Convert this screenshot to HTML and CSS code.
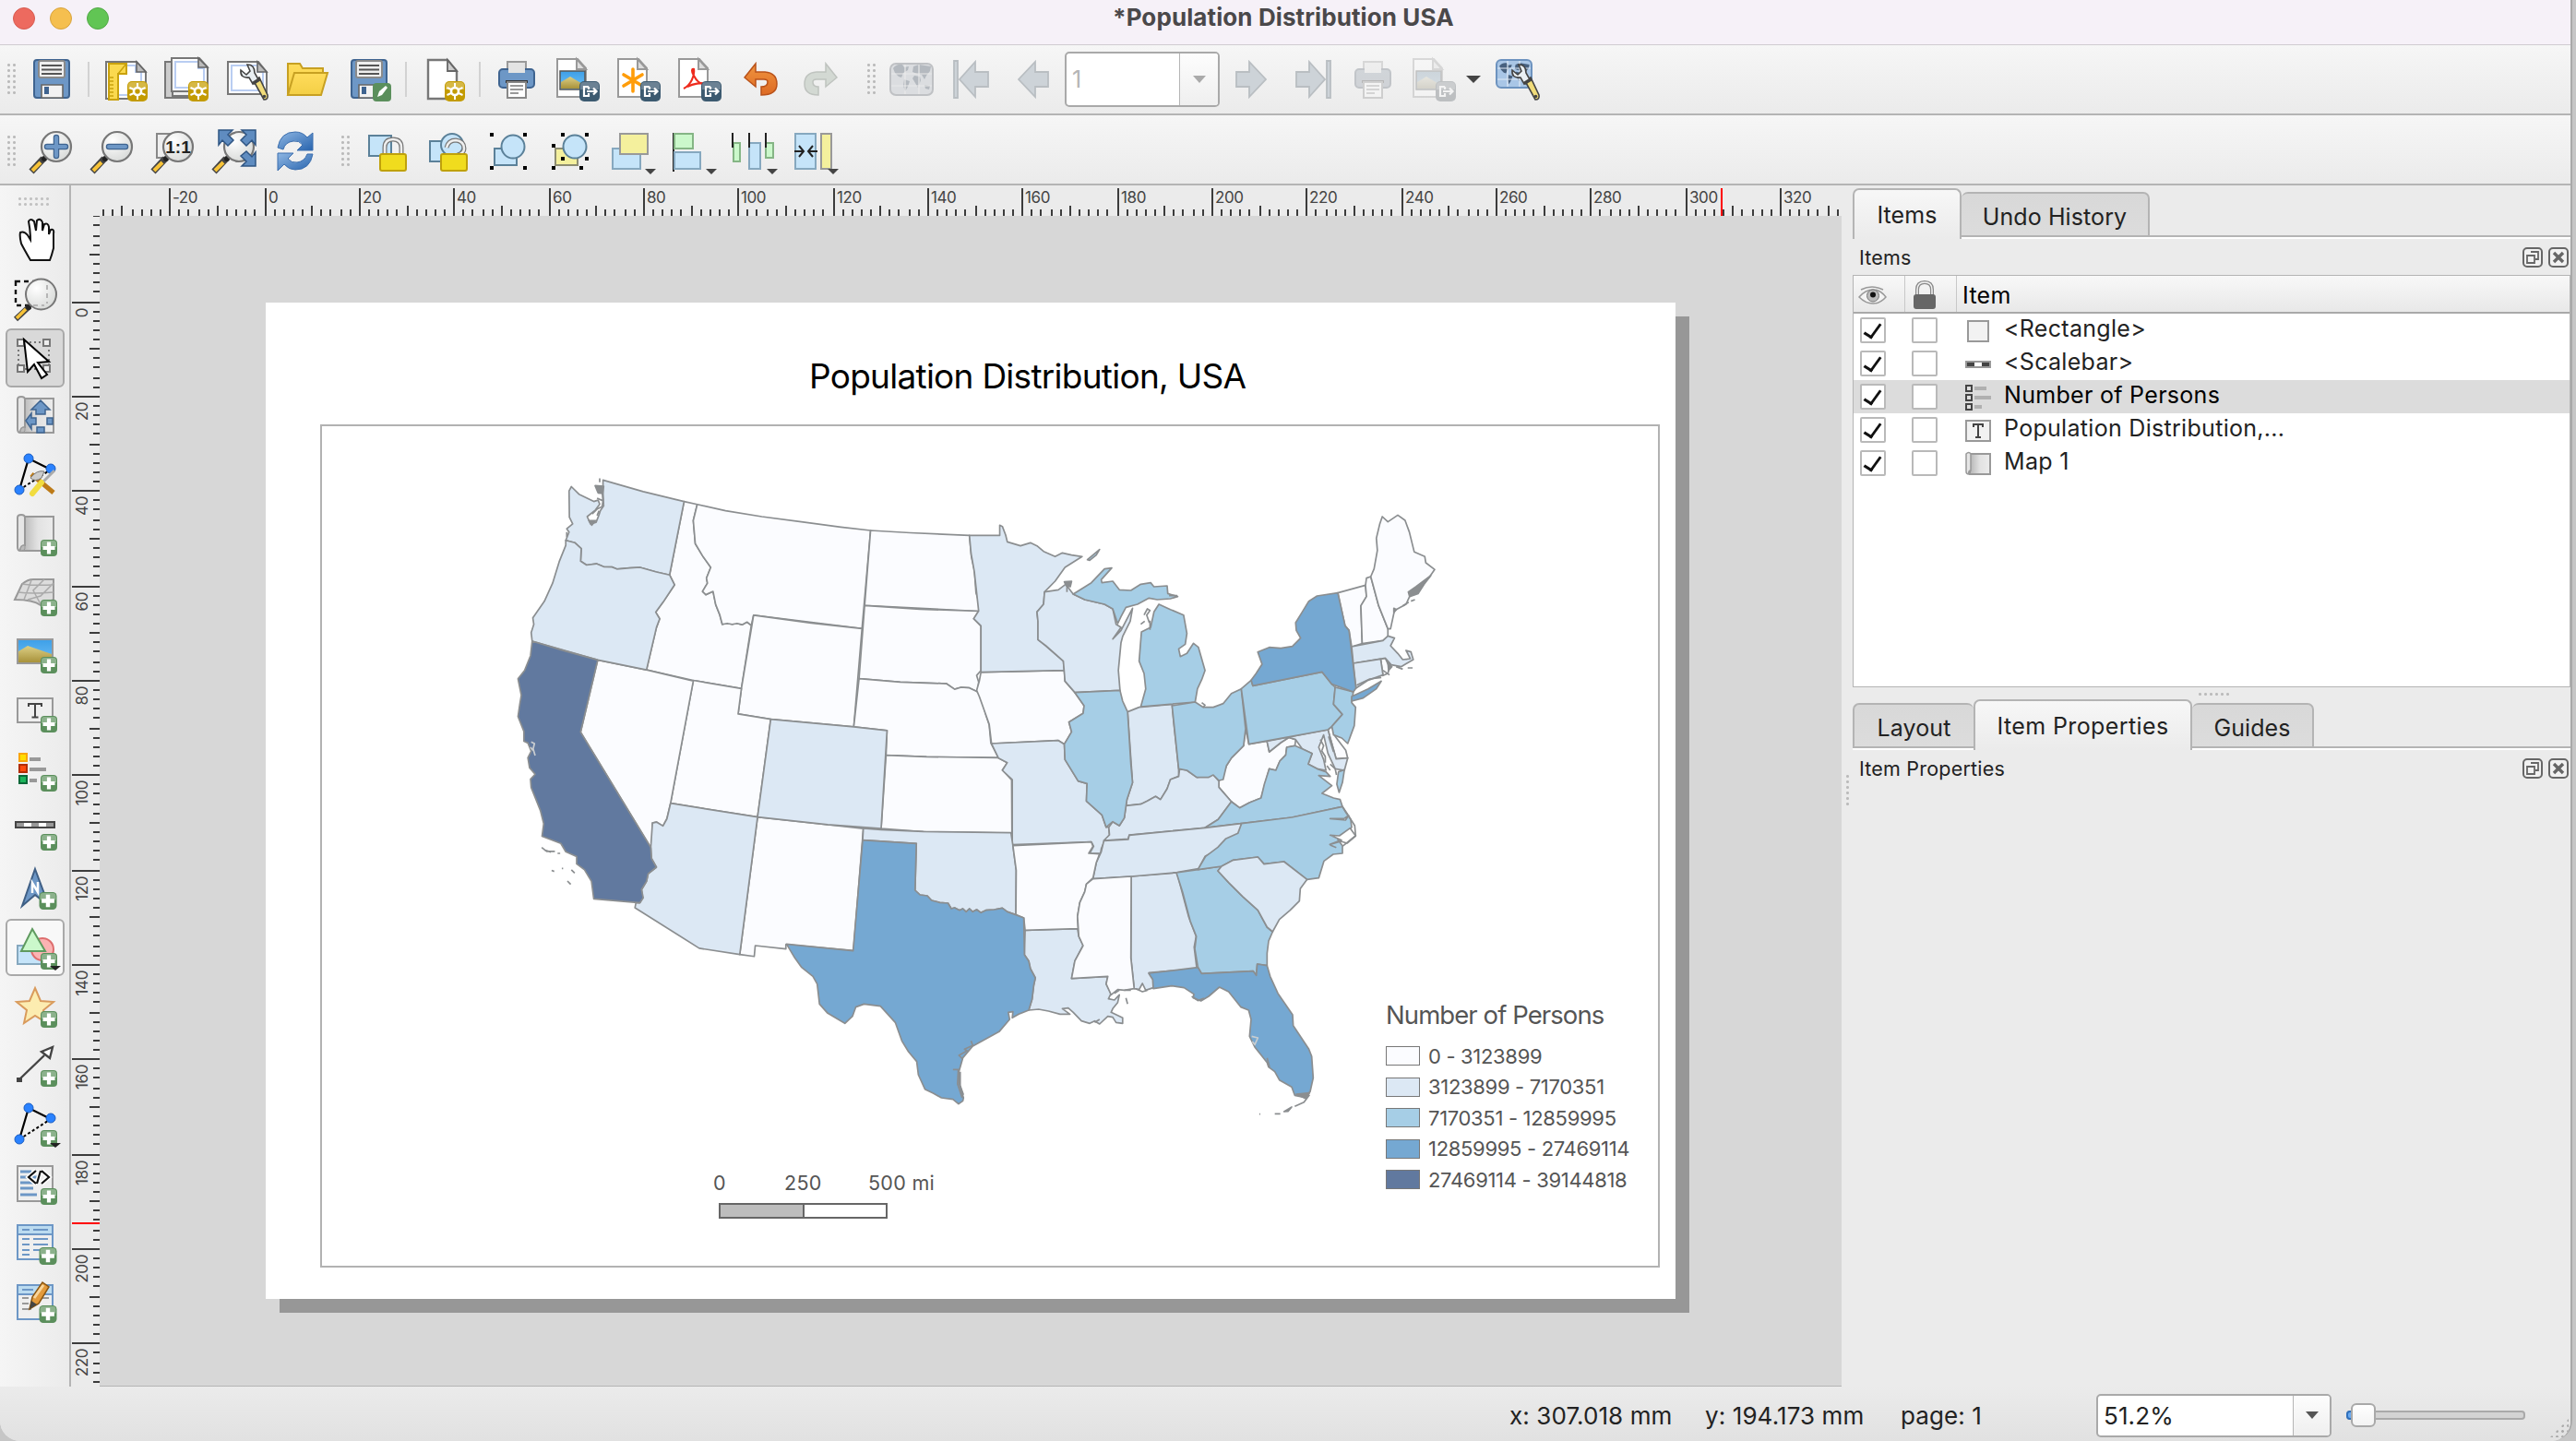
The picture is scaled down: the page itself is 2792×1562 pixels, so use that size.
FILE: index.html
```html
<!DOCTYPE html>
<html lang="en">
<head>
<meta charset="utf-8">
<title>*Population Distribution USA</title>
<link rel="stylesheet" href="styles.css">
</head>
<body>
<svg class="defs" aria-hidden="true">
  <defs>
    <linearGradient id="g-scroll" x1="0" x2="1"><stop offset="0" stop-color="#b5b5b5"/><stop offset=".5" stop-color="#e2e2e2"/><stop offset="1" stop-color="#ececec"/></linearGradient>
    <linearGradient id="g-sky" x1="0" y1="0" x2="0" y2="1"><stop offset="0" stop-color="#3d9fe8"/><stop offset="1" stop-color="#6fc0f5"/></linearGradient>
    <linearGradient id="g-sand" x1="0" y1="0" x2="0" y2="1"><stop offset="0" stop-color="#dccf86"/><stop offset="1" stop-color="#a8923a"/></linearGradient>
    <linearGradient id="g-fold" x1="0" y1="0" x2="0" y2="1"><stop offset="0" stop-color="#ffdc5c"/><stop offset="1" stop-color="#f3cf45"/></linearGradient>
    <linearGradient id="g-undo" x1="0" y1="0" x2="0" y2="1"><stop offset="0" stop-color="#f0953f"/><stop offset="1" stop-color="#dd6a24"/></linearGradient>
    <linearGradient id="g-ref" x1="0" y1="0" x2="1" y2="1"><stop offset="0" stop-color="#8fb7e3"/><stop offset="1" stop-color="#2864ae"/></linearGradient>
    <radialGradient id="g-lens" cx=".35" cy=".3" r=".8"><stop offset="0" stop-color="#fff"/><stop offset="1" stop-color="#d5d7d5"/></radialGradient>
  </defs>
  <symbol id="b-plus" viewBox="0 0 18 18"><rect width="18" height="18" rx="4" fill="#5b8f5c"/><path d="M1 8V4q0-3 3-3h10q3 0 3 3v4z" fill="#8cb28c"/><path d="M9 2.500v13M2.500 9h13" stroke="#fff" stroke-width="4.200"/></symbol>
  <symbol id="b-gear" viewBox="0 0 22 22"><rect width="22" height="22" rx="5" fill="#c39b00"/><path d="M1 9V5q0-4 4-4h12q4 0 4 4v4z" fill="#d6b845"/><circle cx="11" cy="11" r="4" fill="none" stroke="#fff" stroke-width="2.600"/><path d="M11 2v5M11 15v5M2.500 7l4.500 2M15 13l4.500 2M2.500 15l4.500-2M15 9l4.500-2" stroke="#fff" stroke-width="2"/></symbol>
  <symbol id="b-exp" viewBox="0 0 22 22"><rect width="22" height="22" rx="5" fill="#3c5a70"/><path d="M1 9V5q0-4 4-4h12q4 0 4 4v4z" fill="#6c8294"/><path d="M10 6H5v10h5v-3M10 6v3M8 11h10M15 7.500l3.500 3.500-3.500 3.500" fill="none" stroke="#fff" stroke-width="2.200"/></symbol>
  <symbol id="i-save" viewBox="0 0 48 48"><rect x="5" y="3" width="38" height="41" rx="3" fill="#6d97c6" stroke="#3f6490" stroke-width="2"/><rect x="10" y="4" width="28" height="18" rx="2" fill="#efefef" stroke="#8a8a8a" stroke-width="2"/><path d="M13 9h22M13 13.500h22M13 18h22" stroke="#555" stroke-width="1.800"/><path d="M13 44V30h23v14z" fill="#f2f2f2" stroke="#666" stroke-width="1.600"/><rect x="16" y="32" width="5" height="8" fill="#3f6490"/></symbol>
  <symbol id="i-newlayout" viewBox="0 0 48 48"><path d="M3 5h33l10 11v29H3z" fill="#fff" stroke="#777" stroke-width="2"/><path d="M8 9h27v7h6v25H8z" fill="none" stroke="#b9cdf2" stroke-width="2"/><path d="M36 5v11h10z" fill="#bbb" stroke="#666" stroke-width="1.600"/><path d="M6 7h19v11h-9v28H6z" fill="#fad94f" stroke="#c9a20d" stroke-width="2"/><path d="M6 22h5M6 26h5M6 30h5M6 34h5M6 38h5M6 42h5M16 18l9-11" stroke="#c9a20d" stroke-width="1.500"/><use href="#b-gear" x="26" y="26" width="22" height="22"/></symbol>
  <symbol id="i-dup" viewBox="0 0 48 48"><path d="M1 5h8v37h25v2H1z" fill="#ccc" stroke="#777" stroke-width="2"/><path d="M8 1h30l9 10v26H8z" fill="#fff" stroke="#777" stroke-width="2"/><path d="M12 5h25v7h6v21H12z" fill="none" stroke="#b9cdf2" stroke-width="2"/><path d="M37 1v10h10z" fill="#bbb" stroke="#666" stroke-width="1.600"/><use href="#b-gear" x="26" y="26" width="22" height="22"/></symbol>
  <symbol id="i-wrench" viewBox="0 0 48 48"><path d="M31 26l6-4 9 19q1 5-4 5z" fill="#f1dc7a" stroke="#444" stroke-width="1.600"/><path d="M17 14l6 5 4-4-3-7q8 0 8 9l4 7-6 5-4-7q-10 1-9-8z" fill="#e9eff3" stroke="#444" stroke-width="1.600"/><path d="M29 27l8-5 2 3-8 5z" fill="#444"/><circle cx="42.500" cy="42.500" r="1.800" fill="#444"/></symbol>
  <symbol id="i-manager" viewBox="0 0 48 48"><path d="M3 5h33l9 11v24H3z" fill="#fff" stroke="#777" stroke-width="2"/><path d="M7 9h28v7h6v20H7z" fill="none" stroke="#b9cdf2" stroke-width="2"/><path d="M35 5v11h10z" fill="#bbb" stroke="#666" stroke-width="1.600"/><use href="#i-wrench" width="48" height="48"/></symbol>
  <symbol id="i-open" viewBox="0 0 48 48"><path d="M2 41V7h13l3 5h22v6" fill="url(#g-fold)" stroke="#c7a022" stroke-width="2"/><path d="M2 41l7-24h36l-7 24z" fill="url(#g-fold)" stroke="#c7a022" stroke-width="2"/></symbol>
  <symbol id="i-saveas" viewBox="0 0 48 48"><use href="#i-save" width="48" height="48"/><rect x="28" y="28" width="20" height="20" rx="4" fill="#5b8f5c"/><path d="M33 43l2-6 7-6 2 2-6 8z" fill="#fff"/></symbol>
  <symbol id="i-page" viewBox="0 0 48 48"><path d="M8 3h21l10 12v30H8z" fill="#fff" stroke="#777" stroke-width="2.400"/><path d="M29 3v12h10z" fill="#ccc" stroke="#666" stroke-width="1.800"/><use href="#b-gear" x="26" y="26" width="22" height="22"/></symbol>
  <symbol id="i-print" viewBox="0 0 48 48"><rect x="14" y="5" width="20" height="14" fill="#e3e3e3" stroke="#9a9a9a" stroke-width="2"/><rect x="5" y="13" width="38" height="20" rx="4" fill="#6d97c6" stroke="#3f6490" stroke-width="2"/><rect x="15" y="6" width="18" height="11" fill="#e3e3e3"/><rect x="12" y="25" width="24" height="3" fill="#333"/><path d="M14 27h20v17H14z" fill="#fff" stroke="#888" stroke-width="2"/><path d="M17 31h14M17 35h14M17 39h9" stroke="#999" stroke-width="2"/></symbol>
  <symbol id="i-doc" viewBox="0 0 48 48"><path d="M2 2h22l9 10v31H2z" fill="#fff" stroke="#999" stroke-width="2"/><path d="M23 2v11h10z" fill="#ddd" stroke="#999" stroke-width="2"/></symbol>
  <symbol id="i-eximg" viewBox="0 0 48 48"><use href="#i-doc" width="48" height="48"/><rect x="5" y="15" width="27" height="20" fill="url(#g-sky)" stroke="#555" stroke-width="1.500"/><path d="M6 34v-7l10-6 15 9v4z" fill="url(#g-sand)"/><use href="#b-exp" x="26" y="26" width="22" height="22"/></symbol>
  <symbol id="i-exsvg" viewBox="0 0 48 48"><use href="#i-doc" width="48" height="48"/><path d="M18 13v24M8 19l20 12M28 19L8 31" stroke="#ff9d0a" stroke-width="3.600" stroke-linecap="round"/><use href="#b-exp" x="26" y="26" width="22" height="22"/></symbol>
  <symbol id="i-expdf" viewBox="0 0 48 48"><use href="#i-doc" width="48" height="48"/><path d="M7 34c8-4 12-14 11-21-2-1-3 2 0 7 3 6 8 10 13 9-5-2-14 0-20 3" fill="none" stroke="#ee2b1d" stroke-width="2.200"/><use href="#b-exp" x="26" y="26" width="22" height="22"/></symbol>
  <symbol id="i-undo" viewBox="0 0 48 48"><path d="M7 22L19 7v9h10q13 1 13 13 0 12-17 12v-9q7 0 7-5 0-3-4-3h-9v8z" fill="url(#g-undo)" stroke="#b9521a" stroke-width="1.500"/></symbol>
  <symbol id="i-redo" viewBox="0 0 48 48"><path d="M41 22L29 7v9H19Q6 17 6 29q0 12 15 12v-9q-6 0-6-5 0-3 4-3h10v8z" fill="#d3d9d3" stroke="#bfc3bf" stroke-width="1.500"/></symbol>
  <symbol id="i-world" viewBox="0 0 48 48"><path d="M4 12q4-5 10-4l2 3 5-1-1 4-5 3-2 5-3-1-4-4zM16 24l6 2-2 6-3 5-2-6zM26 10l6-2 13 2-1 5-4 5-2 4-3-5-5-1-5-2zM27 20l6 1 1 4-3 8-3-5-3-5zM38 30l6 1-1 4-4-1z"/></symbol>
  <symbol id="i-atlas" viewBox="0 0 48 48"><rect x="1" y="7" width="46" height="34" rx="6" fill="#dbdde0" stroke="#bfc1c4" stroke-width="2"/><use href="#i-world" width="48" height="48" fill="#b4b9bf"/><path d="M17 8v32M32 8v32M2 18h44M2 31h44" stroke="#eaeaea" stroke-width="1.200"/></symbol>
  <symbol id="i-first" viewBox="0 0 48 48"><path d="M4 4h4v40H4zM10 24L27 5v11h14v16H27v11z" fill="#cdd3d8" stroke="#b9bec2" stroke-width="1.800"/></symbol>
  <symbol id="i-prev" viewBox="0 0 48 48"><path d="M8 24L26 5v11h14v16H26v11z" fill="#cdd3d8" stroke="#b9bec2" stroke-width="1.800"/></symbol>
  <symbol id="i-atlasset" viewBox="0 0 48 48"><rect x="1" y="3" width="38" height="30" rx="5" fill="#a9c6e6" stroke="#6d93bf" stroke-width="2"/><use href="#i-world" x="0" y="0" width="40" height="38" fill="#48617f"/><path d="M13 4v28M26 4v28M2 12h36M2 24h36" stroke="#dfeaf5" stroke-width="1.200"/><use href="#i-wrench" width="50" height="48"/></symbol>
  <symbol id="i-lens" viewBox="0 0 48 48"><path d="M15 32L2 46" stroke="#444" stroke-width="7"/><path d="M12 36L3 45" stroke="#f7c338" stroke-width="4"/><circle cx="16" cy="32" r="3" fill="#222"/><circle cx="29" cy="19" r="16" fill="url(#g-lens)" stroke="#777" stroke-width="2.200"/></symbol>
  <symbol id="i-zoomin" viewBox="0 0 48 48"><use href="#i-lens" width="48" height="48"/><path d="M29 9v20M19 19h20" stroke="#3f6490" stroke-width="6.500" stroke-linecap="round"/><path d="M29 9v20M19 19h20" stroke="#6d97c6" stroke-width="4" stroke-linecap="round"/></symbol>
  <symbol id="i-zoomout" viewBox="0 0 48 48"><use href="#i-lens" width="48" height="48"/><path d="M20 19h18" stroke="#3f6490" stroke-width="6.500" stroke-linecap="round"/><path d="M20 19h18" stroke="#6d97c6" stroke-width="4" stroke-linecap="round"/></symbol>
  <symbol id="i-zoom1" viewBox="0 0 48 48"><rect x="6" y="5" width="26" height="26" fill="#eee" stroke="#888" stroke-width="2"/><use href="#i-lens" width="48" height="48"/><text x="29" y="26" text-anchor="middle" font-family="Liberation Sans, sans-serif" font-weight="700" font-size="19" fill="#222">1:1</text></symbol>
  <symbol id="i-zoomfull" viewBox="0 0 48 48"><use href="#i-lens" width="48" height="48"/><path d="M7 1h15l-5 5 6 6-6 6-6-6-4 5zM47 1H32l5 5-6 6 6 6 6-6 4 5zM47 40H32l5-5-6-6 6-5 6 6 4-5z" fill="#5f8cc0" stroke="#2f5583" stroke-width="1.500"/></symbol>
  <symbol id="i-refresh" viewBox="0 0 48 48"><path d="M5 20Q8 3 24 3q8 0 13 6l6-5v19H26l6-6q-4-5-10-4-9 1-11 9z" fill="url(#g-ref)" stroke="#3d6fae"/><path d="M43 27q-3 17-19 17-7 0-12-6l-7 7V26h17l-6 6q4 5 10 4 8-1 11-9z" fill="url(#g-ref)" stroke="#3d6fae"/></symbol>
  <symbol id="i-lock" viewBox="0 0 48 48"><rect x="6" y="7" width="24" height="22" fill="#c5e4f9" stroke="#5b8199" stroke-width="2"/><path d="M23 28V20q0-9 9-9t9 9v8" fill="none" stroke="#777" stroke-width="5"/><path d="M23 28V20q0-9 9-9t9 9v8" fill="none" stroke="#eee" stroke-width="2.500"/><rect x="18" y="27" width="28" height="18" rx="2" fill="#f0dc1e" stroke="#bfa10b" stroke-width="2"/></symbol>
  <symbol id="i-unlock" viewBox="0 0 48 48"><rect x="6" y="13" width="22" height="22" fill="#c5e4f9" stroke="#5b8199" stroke-width="2"/><circle cx="30" cy="17" r="12" fill="#c5e4f9" stroke="#5b8199" stroke-width="2"/><path d="M24 20q2-8 10-8 9 1 9 9 0 5-7 7" fill="none" stroke="#777" stroke-width="5"/><path d="M24 20q2-8 10-8 9 1 9 9 0 5-7 7" fill="none" stroke="#eee" stroke-width="2.500"/><rect x="18" y="27" width="28" height="18" rx="2" fill="#f0dc1e" stroke="#bfa10b" stroke-width="2"/></symbol>
  <symbol id="i-group" viewBox="0 0 48 48"><rect x="10" y="21" width="24" height="18" fill="#c5e4f9" stroke="#5b8199" stroke-width="2"/><circle cx="30" cy="19" r="12.500" fill="#c5e4f9" stroke="#5b8199" stroke-width="2"/><path d="M5 4h4v4H5zM41 4h4v4h-4zM5 40h4v4H5zM41 40h4v4h-4z"/></symbol>
  <symbol id="i-ungroup" viewBox="0 0 48 48"><rect x="10" y="21" width="24" height="18" fill="#f4f09d" stroke="#8d8d72" stroke-width="2"/><circle cx="31" cy="19" r="12.500" fill="#c5e4f9" stroke="#5b8199" stroke-width="2"/><path d="M16 4h4v4h-4zM42 4h4v4h-4zM6 16h4v4H6zM16 30h4v4h-4zM42 30h4v4h-4zM6 40h4v4H6zM36 40h4v4h-4z"/></symbol>
  <symbol id="i-raise" viewBox="0 0 48 48"><rect x="6" y="21" width="30" height="22" fill="#c5e4f9" stroke="#86a8bf" stroke-width="2"/><rect x="14" y="5" width="30" height="22" fill="#f4f09d" stroke="#999" stroke-width="2"/><path d="M41 43h12l-6 6z" fill="#444"/></symbol>
  <symbol id="i-align" viewBox="0 0 48 48"><path d="M6 4v42" stroke="#222" stroke-width="2"/><rect x="7" y="5" width="20" height="16" fill="#cbf8cb" stroke="#85b585" stroke-width="2"/><rect x="7" y="25" width="28" height="18" fill="#c5e4f9" stroke="#86a8bf" stroke-width="2"/><path d="M41 43h12l-6 6z" fill="#444"/></symbol>
  <symbol id="i-distrib" viewBox="0 0 48 48"><rect x="5" y="15" width="7" height="20" fill="#cbf8cb" stroke="#85b585" stroke-width="2"/><rect x="22" y="15" width="12" height="28" fill="#c5e4f9" stroke="#86a8bf" stroke-width="2"/><rect x="40" y="15" width="8" height="16" fill="#cbf8cb" stroke="#85b585" stroke-width="2"/><path d="M4 4v16M22 4v16M40 4v16" stroke="#222" stroke-width="2"/><path d="M41 43h12l-6 6z" fill="#444"/></symbol>
  <symbol id="i-resize" viewBox="0 0 48 48"><rect x="6" y="5" width="22" height="38" fill="#c5e4f9" stroke="#86a8bf" stroke-width="2"/><rect x="34" y="5" width="11" height="38" fill="#f4f09d" stroke="#999" stroke-width="2"/><path d="M5 24h9M10 18l5 6-5 6M30 24h-9M25 18l-5 6 5 6" fill="none" stroke="#222" stroke-width="2"/><path d="M41 43h12l-6 6z" fill="#444"/></symbol>
  <symbol id="i-hand" viewBox="0 0 48 48"><path d="M19 46Q12 34 9 28 7 20 8 16q4-2 8 3l3 5q0-10-2-20 2-4 6 0l2 10 1-11q4-3 6 2v9l2-7q4-2 5 3v8l2-5q4-1 3 4v16q-2 8-4 13z" fill="#fff" stroke="#111" stroke-width="2"/></symbol>
  <symbol id="i-zoomrect" viewBox="0 0 48 48"><path d="M3 5h35v26H3z" fill="none" stroke="#111" stroke-width="2.400" stroke-dasharray="5 4"/><path d="M18 32L3 46" stroke="#444" stroke-width="6"/><path d="M14 35L4 45" stroke="#f7c338" stroke-width="3.500"/><circle cx="17" cy="33" r="3" fill="#222"/><circle cx="30.500" cy="19" r="16.500" fill="url(#g-lens)" stroke="#777" stroke-width="2"/><path d="M37 9v20M22 31h12" stroke="#b5b5b5" stroke-width="2" stroke-dasharray="5 4"/></symbol>
  <symbol id="i-select" viewBox="0 0 48 48"><path d="M8 7h28M8 36h28M6 10v24M39 10v24" stroke="#777" stroke-width="2" stroke-dasharray="2 3"/><path d="M5 4h7v7H5zM33 4h7v7h-7zM5 32h7v7H5zM33 32h7v7h-7z" fill="#eee" stroke="#777" stroke-width="2"/><path d="M12 4l27 24-12 1 10 13-6 4-8-15-7 8z" fill="#fff" stroke="#000" stroke-width="2"/></symbol>
  <symbol id="i-map" viewBox="0 0 48 48"><path d="M10 4h34v37H10z" fill="url(#g-scroll)" stroke="#999" stroke-width="2"/><path d="M5 5q0-3 4-3t4 3v30q-5 0-5 6-3 0-3-4z" fill="#e6e6e6" stroke="#999" stroke-width="2"/><path d="M8 41q0-6 5-6v4q-1 2-5 2z" fill="#bbb" stroke="#999"/></symbol>
  <symbol id="i-move" viewBox="0 0 48 48"><use href="#i-map" width="48" height="48"/><path d="M30 6l10 10h-5v5H25v-5h-5zM14 28l6-8v5h5v7h-5v5zM43 25h-6v7h6zM26 35h8v6h-8z" fill="#6d97c6" stroke="#3f6490" stroke-width="1.500"/></symbol>
  <symbol id="i-nodes" viewBox="0 0 48 48"><path d="M7 39L17 5l24 12" fill="none" stroke="#000" stroke-width="2.200"/><path d="M7 39L41 17" stroke="#000" stroke-width="2" stroke-dasharray="3 2.500"/><g fill="#2a82ff" stroke="#1a5cc0"><circle cx="7" cy="39" r="5"/><circle cx="17" cy="5" r="5"/><circle cx="41" cy="16" r="5"/></g></symbol>
  <symbol id="i-nodeedit" viewBox="0 0 48 48"><use href="#i-nodes" width="48" height="48"/><path d="M20 22l24 20" stroke="#bd7b18" stroke-width="5"/><path d="M19 26q7-9 15-7l-3 7q-7 5-12 0z" fill="#ccc" stroke="#777"/><path d="M45 18L31 32" stroke="#aaa" stroke-width="3"/><path d="M31 31L21 43" stroke="#f1dc3f" stroke-width="6" stroke-linecap="round"/></symbol>
  <symbol id="i-addmap" viewBox="0 0 48 48"><use href="#i-map" width="48" height="48"/><use href="#b-plus" x="30" y="29" width="18" height="18"/></symbol>
  <symbol id="i-add3d" viewBox="0 0 48 48"><path d="M2 30l8-17q6-5 12-5h22v22l-14 6q-8-6-28-6z" fill="#dcdcdc" stroke="#999" stroke-width="2"/><path d="M10 13q10 2 34 1M6 22q14 2 38 0M20 9l-8 21M34 8L22 20l8 15M44 12L30 26l-14 4" fill="none" stroke="#aaa" stroke-width="1.500"/><use href="#b-plus" x="30" y="30" width="18" height="18"/></symbol>
  <symbol id="i-addpic" viewBox="0 0 48 48"><rect x="5" y="9" width="38" height="26" fill="url(#g-sky)" stroke="#999" stroke-width="2"/><path d="M6 34V22l10-6 26 9v9z" fill="url(#g-sand)"/><use href="#b-plus" x="30" y="28" width="18" height="18"/></symbol>
  <symbol id="i-addlabel" viewBox="0 0 48 48"><rect x="5" y="9" width="38" height="26" fill="#efefef" stroke="#999" stroke-width="2"/><path d="M17 18v-3h14v3M24 15v14M20.500 29.500h7" fill="none" stroke="#444" stroke-width="2"/><use href="#b-plus" x="30" y="28" width="18" height="18"/></symbol>
  <symbol id="i-addlegend" viewBox="0 0 48 48"><path d="M7 5h8v8H7z" fill="#fd0" stroke="#f9a50c" stroke-width="2"/><path d="M7 17h8v8H7z" fill="#ff4b0d" stroke="#b32d02" stroke-width="2"/><path d="M7 29h8v8H7z" fill="#1cb55b" stroke="#0b6838" stroke-width="2"/><path d="M18 11h12M18 22h18M18 34h8" stroke="#999" stroke-width="4"/><use href="#b-plus" x="30" y="28" width="18" height="18"/></symbol>
  <symbol id="i-addscale" viewBox="0 0 48 48"><rect x="3" y="15" width="42" height="6" fill="#fff" stroke="#444" stroke-width="2"/><path d="M4 18h8M20 18h8M36 18h8" stroke="#999" stroke-width="4"/><use href="#b-plus" x="30" y="28" width="18" height="18"/></symbol>
  <symbol id="i-addnorth" viewBox="0 0 48 48"><path d="M24 2l15 40-15-12-14 12z" fill="#6d97c6" stroke="#3f5f85" stroke-width="2"/><path d="M21 28V17l6 10V16" fill="none" stroke="#fff" stroke-width="2.500"/><use href="#b-plus" x="28" y="27" width="20" height="19"/></symbol>
  <symbol id="i-addshape" viewBox="0 0 48 48"><rect x="5" y="22" width="26" height="20" fill="#c5e4f9" stroke="#86a8bf" stroke-width="2"/><ellipse cx="32" cy="26" rx="12" ry="12" fill="#fbb3b3" stroke="#dd6d6d" stroke-width="2"/><path d="M21 4l14 24H9z" fill="#cbf8cb" stroke="#5f9a5f" stroke-width="2"/><use href="#b-plus" x="30" y="30" width="18" height="18"/><path d="M40 44h12l-6 5z" fill="#222"/></symbol>
  <symbol id="i-addstar" viewBox="0 0 48 48"><path d="M24 3l6 14 14 1-11 9 4 14-13-8-12 8 3-14-11-9 14-1z" fill="#fcecb0" stroke="#d99b5c" stroke-width="2"/><use href="#b-plus" x="30" y="28" width="18" height="18"/></symbol>
  <symbol id="i-addarrow" viewBox="0 0 48 48"><path d="M7 38L34 12M43 3l-3 12-9-7z" fill="#fff" stroke="#444" stroke-width="2.400"/><path d="M4 36h6v5H4z" fill="#444"/><use href="#b-plus" x="30" y="28" width="18" height="18"/></symbol>
  <symbol id="i-addnode" viewBox="0 0 48 48"><use href="#i-nodes" width="48" height="48"/><use href="#b-plus" x="30" y="29" width="18" height="18"/><path d="M40 43h12l-6 5z" fill="#222"/></symbol>
  <symbol id="i-addhtml" viewBox="0 0 48 48"><rect x="5" y="4" width="38" height="38" fill="#efefef" stroke="#999" stroke-width="2"/><path d="M8 10h12M8 16h22M8 22h16M8 28h14M8 35h18" stroke="#6d97c6" stroke-width="3"/><path d="M25 9l-8 7 8 7M31 9l8 7-8 7M30 9l-4 14" fill="none" stroke="#fff" stroke-width="5"/><path d="M25 9l-8 7 8 7M31 9l8 7-8 7M30 9l-4 14" fill="none" stroke="#111" stroke-width="2.200"/><use href="#b-plus" x="30" y="28" width="18" height="18"/></symbol>
  <symbol id="i-addtable" viewBox="0 0 48 48"><rect x="5" y="4" width="38" height="37" fill="#efefef" stroke="#6d97c6" stroke-width="2"/><path d="M6 5h36v8H6z" fill="#bbdbf0"/><path d="M6 14h36M10 9h8M22 9h16M10 19h8M22 19h16M10 25h8M22 25h16M10 31h8M22 31h16M10 36h8" stroke="#6d97c6" stroke-width="2.200"/><use href="#b-plus" x="28" y="28" width="20" height="19"/></symbol>
  <symbol id="i-addmanual" viewBox="0 0 48 48"><rect x="5" y="5" width="38" height="37" fill="#efefef" stroke="#6d97c6" stroke-width="2"/><path d="M6 6h36v8H6z" fill="#bbdbf0"/><path d="M6 15h36M10 10h12" stroke="#6d97c6" stroke-width="2.200"/><path d="M10 19h7M10 25h7M10 31h10M32 19h7" stroke="#999" stroke-width="2.200"/><path d="M18 31l3-13L32 2l7 5-11 18z" fill="#e39a3b" stroke="#8a5510" stroke-width="1.500"/><path d="M23 19L33 5" stroke="#f8d59b" stroke-width="3"/><path d="M18 31l2-9 6 4z" fill="#444"/><use href="#b-plus" x="28" y="27" width="20" height="19"/></symbol>
  <symbol id="i-float" viewBox="0 0 22 22"><rect x="1" y="1" width="20" height="20" rx="4" fill="#f1f1f1" stroke="#666" stroke-width="2"/><path d="M9 5h8v8h-3M5 9h8v8H5z" fill="none" stroke="#666" stroke-width="1.800"/></symbol>
  <symbol id="i-close" viewBox="0 0 22 22"><rect x="1" y="1" width="20" height="20" rx="4" fill="#f1f1f1" stroke="#666" stroke-width="2"/><path d="M6 6l10 10M16 6L6 16" stroke="#666" stroke-width="3.400"/></symbol>
</svg>

<div class="window">
  <header class="titlebar">
    <div class="lights"><i class="red"></i><i class="amber"></i><i class="green"></i></div>
    <h1>*Population Distribution USA</h1>
  </header>

  <div class="toolbar">
    <span class="grip"></span>
    <svg><use href="#i-save"/></svg><span class="sep"></span>
    <svg><use href="#i-newlayout"/></svg><svg><use href="#i-dup"/></svg><svg><use href="#i-manager"/></svg><svg><use href="#i-open"/></svg><svg><use href="#i-saveas"/></svg><span class="sep"></span>
    <svg><use href="#i-page"/></svg><span class="sep"></span>
    <svg><use href="#i-print"/></svg><svg><use href="#i-eximg"/></svg><svg><use href="#i-exsvg"/></svg><svg><use href="#i-expdf"/></svg><svg><use href="#i-undo"/></svg><svg><use href="#i-redo"/></svg>
    <span class="grip mid"></span>
    <svg><use href="#i-atlas"/></svg><svg><use href="#i-first"/></svg><svg><use href="#i-prev"/></svg>
    <div class="combo page-combo"><span>1</span><b></b></div>
    <svg class="flip"><use href="#i-prev"/></svg><svg class="flip"><use href="#i-first"/></svg><svg class="off"><use href="#i-print"/></svg><svg class="off"><use href="#i-eximg"/></svg><span class="drop"></span>
    <svg><use href="#i-atlasset"/></svg>
  </div>

  <div class="toolbar second">
    <span class="grip"></span>
    <svg><use href="#i-zoomin"/></svg><svg><use href="#i-zoomout"/></svg><svg><use href="#i-zoom1"/></svg><svg><use href="#i-zoomfull"/></svg><svg><use href="#i-refresh"/></svg>
    <span class="grip mid"></span>
    <svg><use href="#i-lock"/></svg><svg><use href="#i-unlock"/></svg><svg><use href="#i-group"/></svg><svg><use href="#i-ungroup"/></svg><svg><use href="#i-raise"/></svg><svg><use href="#i-align"/></svg><svg><use href="#i-distrib"/></svg><svg><use href="#i-resize"/></svg>
  </div>

  <main class="work">
    <nav class="tools">
      <span class="hgrip"></span>
      <a><svg><use href="#i-hand"/></svg></a><a><svg><use href="#i-zoomrect"/></svg></a><a class="pressed"><svg><use href="#i-select"/></svg></a><a><svg><use href="#i-move"/></svg></a><a><svg><use href="#i-nodeedit"/></svg></a><a><svg><use href="#i-addmap"/></svg></a><a><svg><use href="#i-add3d"/></svg></a><a><svg><use href="#i-addpic"/></svg></a><a><svg><use href="#i-addlabel"/></svg></a><a><svg><use href="#i-addlegend"/></svg></a><a><svg><use href="#i-addscale"/></svg></a><a><svg><use href="#i-addnorth"/></svg></a><a class="raised"><svg><use href="#i-addshape"/></svg></a><a><svg><use href="#i-addstar"/></svg></a><a><svg><use href="#i-addarrow"/></svg></a><a><svg><use href="#i-addnode"/></svg></a><a><svg><use href="#i-addhtml"/></svg></a><a><svg><use href="#i-addtable"/></svg></a><a><svg><use href="#i-addmanual"/></svg></a>
    </nav>

    <section class="view">
      <svg class="ruler-h" id="ruler-h" width="1918" height="33"></svg>
      <svg class="ruler-v" id="ruler-v" width="30" height="1269"></svg>
      <div class="canvas">
        <div class="paper">
          <div class="frame"></div>
          <h2 class="map-title">Population Distribution, USA</h2>

          <svg class="map" viewBox="288 328 1528 1080">
            <!-- western states -->
            <g transform="translate(540 500) scale(.35714)">
              <g class="c1">
                <path d="M564 122L604 131 592 180 598 250 622 290 645 322 632 355 635 370 620 395 630 405 652 395 660 435 672 465 680 495 695 492 710 495 725 492 740 496 755 488 768 498 738 690 592 665 450 633 480 505 490 478 478 458 500 428 535 375 520 345Z"/>
                <path d="M604 131L690 150 800 168 920 184 1040 200 1130 210 1104 508 775 467 768 498 755 488 740 496 725 492 710 495 695 492 680 495 672 465 660 435 652 395 630 405 620 395 635 370 632 355 645 322 622 290 598 250 592 180Z"/>
                <path d="M775 467L950 491 1104 508 1079 806 827 783 728 767 738 690Z"/>
                <path d="M1130 210L1250 217 1430 225 1436 290 1445 330 1450 400 1460 430 1458 455 1112 438Z"/>
                <path d="M1112 438L1280 449 1458 455 1443 478 1465 500 1465 635 1452 650 1458 670 1455 700 1430 688 1405 686 1385 692 1360 675 1220 670 1095 660Z"/>
                <path d="M1095 660L1220 670 1360 675 1385 692 1405 686 1430 688 1455 700 1465 715 1480 770 1490 800 1495 855 1518 900 1300 897 1177 892 1180 817 1079 806Z"/>
                <path d="M1177 892L1300 897 1518 900 1545 915 1530 937 1558 967 1559 1129 1300 1125 1162 1115Z"/>
                <path d="M592 665L738 690 728 767 827 783 787 1080 523 1038Z"/>
                <path d="M302 603L450 633 592 667 523 1038 512 1085 500 1107 480 1095 468 1098 468 1140 463 1172 250 822Z"/>
                <path d="M787 1080L1000 1103 1108 1115 1078 1485 873 1467 873 1480 780 1470 777 1503 733 1497Z"/>
              </g>
              <g class="c2">
                <path d="M318 57L440 92 564 122 520 345 480 336 430 322 400 324 360 327 345 321 320 320 298 311 268 315 250 303 252 265 232 247 205 240 215 215 208 205 226 190 216 170 215 90 222 77 245 100 290 122 303 118 308 130 295 148 270 168 280 190 297 185 305 165 310 150 320 135 318 95Z"/>
                <path d="M205 240L232 247 252 265 250 303 268 315 298 311 320 320 345 321 360 327 400 324 430 322 480 336 520 345 535 375 500 428 478 458 490 478 480 505 450 633 302 603 103 546 100 520 108 495 105 475 140 425 165 370 185 305 205 255Z"/>
                <path d="M827 783L1079 806 1180 817 1162 1115 1000 1103 787 1080Z"/>
                <path d="M523 1038L787 1080 733 1497 610 1478 415 1355 418 1340 430 1340 438 1325 435 1300 450 1275 455 1252 480 1232 465 1205 463 1172 468 1098 480 1095 500 1107 512 1085Z"/>
              </g>
              <path class="c5" d="M103 546L200 575 302 603 250 822 463 1172 465 1205 480 1232 455 1252 450 1275 435 1300 440 1325 430 1340 290 1328 283 1275 262 1240 238 1222 238 1200 205 1185 190 1160 133 1138 138 1100 128 1060 100 990 98 965 112 950 95 930 90 900 100 880 90 855 78 850 78 820 60 775 65 740 70 710 60 660 80 635 98 590Z"/>
              <path class="blob" d="M294 74L320 76 317 98 303 96ZM275 180L296 180 284 194Z"/>
              <path class="isle" d="M308 52v12M316 98L318 122M300 112L318 120 315 138 300 145 285 160M300 165L306 150M132 1172l15 12 25 0M140 1180l20 6M180 1190h8M162 1242l8 3M193 1236h4M222 1240l10 10M210 1274l10 10M208 215v15"/>
              <path class="isle pale" d="M100 852l10 5-4 16 6 20M98 868l8 10"/>
            </g>
            <!-- northern, central and north-eastern states -->
            <g transform="translate(1040 500) scale(.35714 .33333)">
              <g class="c1">
                <path d="M65 686L318 680 320 715 350 752 378 795 375 820 332 848 340 880 318 920 300 908 97 918 90 855 75 810 60 765 52 745 60 715Z"/>
                <path d="M1148 428L1232 403 1235 440 1218 470 1222 593 1190 603 1182 550 1170 535Z"/>
                <path d="M1232 403L1235 380 1248 375 1272 470 1300 545 1300 570 1285 583 1222 593 1218 470 1235 440Z"/>
                <path d="M1248 375L1258 350 1268 290 1265 250 1275 205 1283 180 1300 197 1330 175 1352 192 1365 230 1380 295 1412 310 1415 330 1442 352 1425 378 1400 400 1370 430 1355 465 1320 485 1308 545 1300 545 1272 470Z"/>
                <path d="M1278 643L1292 640 1305 670 1300 690 1285 697Z"/>
                <path d="M868 870L878 920 933 910 940 945 975 915 1000 898 1020 905 1018 925 993 930 990 955 972 975 960 1005 940 1000 915 1095 880 1110 850 1127 825 1107 787 1060 787 1040 800 1020 810 990 825 965 862 925Z"/>
                <path d="M1118 873L1130 862 1140 895 1172 940 1178 965 1143 968Z"/>
              </g>
              <g class="c2">
                <path d="M30 241L122 241 122 208 130 212 140 240 145 262 185 275 215 265 235 275 255 293 290 310 312 298 340 305 372 310 320 345 290 390 258 425 255 465 235 490 238 520 238 580 262 600 315 650 318 680 65 686 65 535 43 512 58 487 45 360 35 300Z"/>
                <path d="M258 425L300 418 322 400 345 432 380 450 440 465 465 480 475 530 490 540 465 578 490 550 525 478 518 520 495 570 490 590 482 680 487 745 350 752 320 715 315 650 262 600 238 580 238 520 235 490 255 465Z"/>
                <path d="M510 815L545 800 645 790 650 850 665 1000 665 1025 640 1035 630 1065 610 1100 595 1090 570 1105 550 1115 505 1120 508 1100 525 1045Z"/>
                <path d="M97 918L300 908 318 920 320 970 360 1040 387 1048 385 1105 432 1150 445 1190 453 1190 455 1215 440 1235 430 1260 428 1275 395 1275 407 1252 400 1238 160 1247 160 1035 130 1005 145 980 118 965Z"/>
                <path d="M438 1233L455 1215 453 1190 465 1172 485 1185 500 1160 505 1120 550 1115 570 1105 595 1090 610 1100 630 1065 640 1035 665 1025 668 1000 690 1005 720 1028 770 1020 787 1040 787 1060 825 1107 785 1165 745 1192 515 1215 512 1228Z"/>
                <path d="M1190 603L1285 583 1300 568 1320 575 1308 600 1330 625 1345 645 1368 642 1355 615 1370 620 1377 645 1340 668 1310 662 1292 640 1195 657Z"/>
                <path d="M1195 657L1278 643 1285 695 1240 712 1203 738Z"/>
                <path d="M933 910L1118 873 1143 968 1178 965 1168 1005 1140 1000 1118 950 1105 890 1090 930 1105 970 1112 1005 1085 1000 1058 985 1070 950 1040 935 1020 905 1000 898 975 915 940 945Z"/>
              </g>
              <g class="c3">
                <path d="M350 752L487 745 495 780 510 815 520 985 525 1045 508 1100 500 1160 485 1185 465 1172 445 1190 432 1150 385 1105 387 1048 360 1040 320 970 318 920 340 880 332 848 375 820 378 795Z"/>
                <path d="M345 432L400 395 440 350 462 347 430 385 432 395 465 390 485 418 520 420 550 400 580 395 590 408 630 405 632 430 662 440 640 447 600 450 575 445 540 465 505 475 490 505 480 528 465 480 440 465 380 450Z"/>
                <path d="M605 465L640 482 680 500 690 560 685 595 665 610 670 635 690 625 710 592 725 605 745 680 735 710 722 740 715 783 640 790 550 798 565 740 560 690 545 650 552 555 580 540 590 490Z"/>
                <path d="M645 795L715 783 740 800 770 800 800 788 825 755 855 740 868 870 862 925 825 965 810 990 800 1035 787 1038 770 1020 755 1028 720 1028 690 1005 665 1000Z"/>
                <path d="M855 740L885 712 890 730 1100 685 1130 725 1140 735 1135 790 1162 823 1130 862 1118 873 878 920Z"/>
                <path d="M1140 735L1195 750 1190 785 1202 800 1198 860 1178 918 1160 900 1135 890 1130 862 1162 823 1135 790Z"/>
                <path d="M745 1192L785 1165 825 1107 850 1127 880 1110 915 1095 925 1050 940 1000 960 1005 972 975 990 955 993 930 1018 925 1040 935 1070 950 1058 985 1085 1000 1112 1010 1125 1025 1090 1022 1130 1055 1100 1080 1135 1095 1155 1100 1162 1123 1010 1158 855 1178Z"/>
                <path d="M1150 1010L1168 1003 1162 1045 1152 1077 1145 1050Z"/>
                <path d="M388 320L425 287 415 305 395 322Z"/>
              </g>
              <g class="c4">
                <path d="M885 712L900 690 918 660 905 620 940 605 975 608 1010 602 1035 575 1022 550 1020 525 1040 490 1060 455 1085 438 1148 428 1170 535 1182 550 1192 640 1203 738 1195 750 1130 725 1100 685 890 730Z"/>
                <path d="M1190 765L1240 740 1280 715 1265 740 1225 770 1190 780Z"/>
              </g>
              <path class="blob" d="M1430 372L1410 400 1392 430 1366 440 1362 425 1385 408ZM1318 478L1326 482 1318 492ZM1300 655L1312 668 1302 680ZM318 392L340 390 336 408 324 405Z"/>
              <path class="isle" d="M326 405v20M636 437h25M735 785l10 8-6 8M560 500l10-20 8 5-10 15 8 25M550 530l12-10M578 548v-30M1345 470l18-12M1370 455l12-5M1325 668l20 8M1360 672l15 0M1285 680l20 15M1095 905l10 20-5 15M1098 940l12 20 0 20M1125 985l15 15 4 20M1115 990l10 15M1120 895l15 50M1205 728l40-20 35-5"/>
            </g>
            <!-- southern states -->
            <g transform="translate(840 860) scale(.35714 .33333)">
              <g class="c2">
                <path d="M268 114L322 118 450 124 716 128 722 170 732 250 731 395 705 385 690 373 665 378 640 380 625 388 612 378 600 385 590 375 580 385 570 375 560 380 545 372 535 375 525 357 500 355 475 348 462 333 440 330 425 315 429 163 266 152Z"/>
                <path d="M759 445L918 440 922 465 935 495 910 545 900 602 1010 595 1005 620 1020 650 1012 668 1030 672 1045 655 1040 680 1025 700 1020 712 1055 730 1055 748 1035 745 1025 728 1010 725 985 750 970 740 955 748 930 740 905 712 890 698 872 700 895 718 865 718 830 708 800 702 770 705 780 670 785 625 790 600 775 570 770 545 757 525Z"/>
                <path d="M1081 270L1220 258 1240 340 1255 400 1278 465 1272 500 1280 570 1135 583 1150 605 1148 632 1125 640 1115 618 1105 638 1090 635 1080 535Z"/>
                <path d="M998 154L1072 150 1075 136 1305 112 1415 98 1415 115 1400 140 1365 155 1340 185 1305 205 1285 245 1220 257 1081 270 965 278 975 225 990 190Z"/>
              </g>
              <g class="c1">
                <path d="M722 170L960 158 965 172 952 195 985 197 975 225 965 275 945 295 940 320 925 355 918 400 920 440 759 445 755 405 731 395 732 250Z"/>
                <path d="M965 278L1081 270 1080 535 1090 635 1060 640 1040 638 1020 655 1005 620 1010 595 900 602 910 545 935 495 922 465 918 400 925 355 940 320 945 295Z"/>
              </g>
              <path class="c4" d="M266 152L429 163 425 315 440 330 462 333 475 348 500 355 525 357 535 375 545 372 560 380 570 375 580 385 590 375 600 385 612 378 625 388 640 380 665 378 690 373 705 385 731 395 755 405 757 525 770 545 775 570 790 600 785 625 780 670 770 705 740 718 720 730 722 710 708 712 712 735 680 775 600 822 570 860 558 905 558 940 572 990 570 1000 557 1010 540 995 505 990 480 975 455 962 435 915 430 872 405 840 385 805 365 745 320 692 270 685 245 695 235 725 212 748 160 715 135 685 128 620 115 595 80 565 60 535 35 490 237 512Z"/>
              <path class="isle" d="M595 805l5 15-25 12 8 5-25 15 12 12M540 898l18 0M556 900l-2 45 14 45M562 905l0 45 10 30M1030 650l15-10M1060 640h20M1065 665l5 20M1095 635l20 10 15-5M970 745l15-10"/>
            </g>
            <!-- south-eastern states -->
            <g transform="translate(1140 780) scale(.33333)">
              <g class="c3">
                <path d="M405 498L475 488 552 477 540 492 575 530 620 575 670 620 700 675 718 690 705 720 700 760 700 800 668 795 665 832 655 818 487 826 475 805 465 745 470 705 450 655 425 560Z"/>
                <path d="M617 338L780 318 945 283 955 300 972 325 975 350 955 375 930 390 945 410 945 435 915 438 885 460 868 515 830 520 755 462 690 470 670 447 590 457 552 477 475 488 500 445 540 415 565 388 605 370Z"/>
              </g>
              <path class="c2" d="M552 477L590 457 670 447 690 470 755 462 830 520 808 550 805 590 775 620 740 650 718 690 700 675 670 620 620 575 575 530 540 492Z"/>
              <path class="c4" d="M315 825L475 806 487 826 655 818 665 832 668 795 700 800 710 835 735 890 783 960 785 995 835 1070 845 1095 850 1165 840 1210 820 1228 790 1222 780 1195 740 1172 725 1145 705 1130 700 1115 660 1065 643 1030 648 975 640 945 615 935 575 885 545 870 510 900 485 915 460 905 462 893 430 872 390 866 330 875 328 845Z"/>
              <path class="inlet" d="M905 376l30 2 35-25 18 25-28 24-20-6-36 10 38-14zM905 322l45 0 15-10-10 15z"/>
              <path class="blob" d="M795 1218L838 1214 825 1232ZM755 1275l25-15-12 14z"/>
              <path class="isle" d="M945 283L960 305 985 345 988 378 945 412M905 408l20 8M700 1100l8 30M725 1282h18M790 1258l30-14 18-24M675 1283h3M455 900l20 14 20-8"/>
              <path class="isle pale" d="M650 1030l20 5-10 22-8-10"/>
            </g>
          </svg>

          <dl class="legend">
            <dt>Number of Persons</dt>
            <dd><i class="s1"></i>0 - 3123899</dd>
            <dd><i class="s2"></i>3123899 - 7170351</dd>
            <dd><i class="s3"></i>7170351 - 12859995</dd>
            <dd><i class="s4"></i>12859995 - 27469114</dd>
            <dd><i class="s5"></i>27469114 - 39144818</dd>
          </dl>

          <div class="scale">
            <div class="nums"><span>0</span><span>250</span><span>500 mi</span></div>
            <div class="bar"><i></i><i></i></div>
          </div>
        </div>
      </div>
    </section>

    <aside class="panels">
      <div class="tabs first"><span class="tab on t-items">Items</span><span class="tab t-undo">Undo History</span></div>
      <div class="dock-title"><span>Items</span><svg><use href="#i-float"/></svg><svg><use href="#i-close"/></svg></div>
      <div class="table">
        <div class="thead">
          <span class="c-eye"><svg width="32" height="24" viewBox="0 0 32 24"><path d="M1 14Q8 6 16 6t14 8q-6 7-14 7T1 14z" fill="#f4f4f4" stroke="#999" stroke-width="1.500"/><circle cx="16" cy="12.500" r="6.500" fill="#bbb" stroke="#777"/><circle cx="16" cy="11.500" r="3" fill="#111"/><path d="M3 6q12-6 24 0" fill="none" stroke="#999" stroke-width="1.500"/></svg></span>
          <span class="c-lock"><svg width="26" height="32" viewBox="0 0 26 32"><path d="M5 16V10q0-8 8-8t8 8v6" fill="none" stroke="#888" stroke-width="4"/><path d="M5 16V10q0-8 8-8t8 8v6" fill="none" stroke="#f3f3f3" stroke-width="1.500"/><rect x="1" y="15" width="24" height="16" rx="3" fill="#666"/></svg></span>
          <span class="c-item">Item</span>
        </div>
        <div class="row"><i class="check on"></i><i class="check"></i><svg viewBox="0 0 28 28"><rect x="3" y="3" width="22" height="22" fill="#f2f2f2" stroke="#999" stroke-width="2"/></svg><span>&lt;Rectangle&gt;</span></div>
        <div class="row"><i class="check on"></i><i class="check"></i><svg viewBox="0 0 28 28"><rect x="1" y="11" width="26" height="6" fill="#fff" stroke="#999" stroke-width="2"/><path d="M2 14h8M18 14h8" stroke="#444" stroke-width="4"/></svg><span>&lt;Scalebar&gt;</span></div>
        <div class="row sel"><i class="check on"></i><i class="check"></i><svg viewBox="0 0 28 28"><path d="M1 1h6v6H1zM1 11h6v6H1zM1 21h6v6H1z" fill="#ddd" stroke="#444" stroke-width="2"/><path d="M10 4h13M10 14h18M10 24h8" stroke="#b0b0b0" stroke-width="4"/></svg><span>Number of Persons</span></div>
        <div class="row"><i class="check on"></i><i class="check"></i><svg viewBox="0 0 28 28"><rect x="1" y="3" width="26" height="22" fill="#f2f2f2" stroke="#999" stroke-width="2"/><path d="M9 10V7h10v3M14 7v14M11 21h6" fill="none" stroke="#444" stroke-width="2"/></svg><span>Population Distribution,...</span></div>
        <div class="row"><i class="check on"></i><i class="check"></i><svg viewBox="0 0 28 28"><path d="M5 3h22v22H5z" fill="url(#g-scroll)" stroke="#999" stroke-width="2"/><path d="M1 3q3-3 5 0v18q-3 0-2 4-3 0-3-3z" fill="#e6e6e6" stroke="#999" stroke-width="1.500"/></svg><span>Map 1</span></div>
      </div>
      <span class="split"></span>
      <div class="tabs lower"><span class="tab t-layout">Layout</span><span class="tab on t-prop">Item Properties</span><span class="tab t-guides">Guides</span></div>
      <div class="dock-title"><span>Item Properties</span><svg><use href="#i-float"/></svg><svg><use href="#i-close"/></svg></div>
      <span class="vsplit"></span>
    </aside>
  </main>

  <footer class="status">
    <span class="sx">x: 307.018 mm</span><span class="sy">y: 194.173 mm</span><span class="sp">page: 1</span>
    <div class="combo zoom-combo"><span>51.2%</span><b></b></div>
    <div class="slider"><i></i><b></b></div>
    <span class="sizegrip"></span>
  </footer>
</div>
<script src="rulers.js"></script>
</body>
</html>
```

FILE: styles.css
```css
* { box-sizing: border-box; }
body { margin: 0; background: #c6c6c6; font-family: Inter, "Liberation Sans", sans-serif; color: #222; }
h1, h2, dl, dd { margin: 0; font-weight: 400; }
.defs { position: absolute; width: 0; height: 0; }
.window { width: 2788px; height: 1562px; display: flex; flex-direction: column; background: #ebebeb; border-right: 2px solid #a9a9a9; border-radius: 0 0 22px 22px; overflow: hidden; }

.titlebar { height: 49px; flex: none; display: flex; align-items: center; background: #f6f1f8; border-bottom: 1px solid #cfcbd0; padding: 0 0 9px 14px; }
.lights { display: flex; gap: 16px; width: 1192px; }
.lights i { width: 24px; height: 24px; border-radius: 50%; border: 1px solid; }
.lights .red { background: #ed6a5f; border-color: #d75a50; }
.lights .amber { background: #f5bf4f; border-color: #d8a33c; }
.lights .green { background: #61c554; border-color: #51a846; }
.titlebar h1 { font-size: 26px; line-height: 30px; font-weight: 700; color: #4a484a; letter-spacing: .1px; white-space: nowrap; margin-top: -2px; }

.toolbar { height: 76px; flex: none; display: flex; align-items: center; background: linear-gradient(#f6f6f6, #ebebeb); border-bottom: 2px solid #b4b4b4; }
.toolbar svg { width: 48px; height: 48px; margin: 0 9px; flex: none; overflow: visible; }
symbol { overflow: visible; }
.second { padding-top: 3px; }
.grip { width: 9px; height: 34px; margin: 0 6px 0 8px; flex: none; background: radial-gradient(circle at 1.500px 1.500px, #bbb 1.300px, transparent 1.600px) 0 0 / 6px 6px; }
.grip.mid { margin: 0 6px 0 17px; }
.sep { width: 2px; height: 38px; margin: 0 6px; background: #d2d2d2; flex: none; }
.flip { transform: translateX(-2px) scaleX(-1); }
.off { opacity: .3; filter: grayscale(.7); transform: translateX(-2px); }
.drop { width: 23px; flex: none; }
.drop::before { content: ""; display: block; width: 0; border: 8px solid transparent; border-top: 8px solid #444; border-bottom: 0; }
.combo { display: flex; border: 2px solid #a9a9a9; border-radius: 5px; background: #fff; overflow: hidden; flex: none; }
.combo span { flex: 1; display: flex; align-items: center; }
.combo b { border-left: 1px solid #b5b5b5; background: linear-gradient(#fdfdfd, #efefef); display: flex; align-items: center; justify-content: center; }
.combo b::before { content: ""; border: 7px solid transparent; border-top: 8px solid #555; border-bottom: 0; }
.page-combo { width: 168px; height: 60px; margin: 0 3px 0 1px; font-size: 25px; color: #b5b5b5; }
.page-combo span { padding-left: 6px; }
.page-combo b { width: 42px; }
.page-combo b::before { border-top-color: #aaa; }

.work { height: 1302px; flex: none; display: flex; }
.tools { width: 77px; flex: none; border-right: 2px solid #b4b4b4; background: linear-gradient(90deg, #f5f5f5, #ebebeb); display: flex; flex-direction: column; align-items: center; padding-top: 13px; }
.hgrip { width: 36px; height: 10px; margin-bottom: 4px; flex: none; background: radial-gradient(circle at 1.500px 1.500px, #c2c2c2 1.300px, transparent 1.600px) 0 0 / 6px 6px; }
.tools a { height: 64px; width: 64px; flex: none; display: flex; align-items: center; justify-content: center; border-radius: 6px; }
.tools svg { width: 48px; height: 48px; overflow: visible; }
.tools .pressed { background: #d9d9d9; border: 2px solid #a9a9a9; }
.tools .raised { background: #f8f8f8; border: 2px solid #a9a9a9; height: 62px; margin-bottom: 2px; }

.view { width: 1919px; flex: none; display: grid; grid-template: 33px 1269px / 31px 1888px; }
.view svg { display: block; }
.ruler-h { grid-area: 1 / 1 / 2 / 3; margin-left: 1px; }
.ruler-v { grid-area: 2 / 1; margin-left: 1px; }
.canvas { grid-area: 2 / 2; background: #d7d7d7; border-bottom: 1px solid #b4b4b4; padding: 94px 0 0 180px; }
.paper { position: relative; width: 1528px; height: 1080px; background: #fff; box-shadow: 15px 15px 0 #979797; clip-path: polygon(0 0, 1528px 0, 1528px 15px, 1543px 15px, 1543px 1095px, 15px 1095px, 15px 1080px, 0 1080px); }
.frame { position: absolute; left: 59px; top: 132px; width: 1452px; height: 914px; border: 2px solid #b2b2b2; }
.map-title { position: absolute; left: 589px; top: 57px; font-size: 37px; line-height: 46px; color: #000; letter-spacing: -.730px; white-space: nowrap; }
.map { position: absolute; inset: 0; width: 1528px; height: 1080px; }
.map path { stroke: #8b8e90; stroke-width: 1.700px; stroke-linejoin: round; vector-effect: non-scaling-stroke; }
.c1 { fill: #fbfcff; } .c2 { fill: #dce8f4; } .c3 { fill: #a6cee6; } .c4 { fill: #75a8d2; } .c5 { fill: #61799f; }
.map .isle { fill: none; }
.map .pale { stroke: #c9cdd0; }
.map .blob { fill: #8b8e90; }
.map .inlet { fill: #fff; }
.legend { position: absolute; left: 1214px; top: 754px; color: #555; }
.legend dt { font-size: 27.500px; line-height: 36px; letter-spacing: -.920px; margin-bottom: 10px; white-space: nowrap; }
.legend dd { display: flex; align-items: center; height: 33.500px; font-size: 22px; letter-spacing: -.320px; white-space: nowrap; }
.legend i { width: 37px; height: 21px; margin-right: 9px; border: 1.500px solid #777; }
.s1 { background: #fbfcff; } .s2 { background: #dce8f4; } .s3 { background: #a6cee6; } .s4 { background: #75a8d2; } .s5 { background: #61799f; }
.scale { position: absolute; left: 491px; top: 940px; width: 240px; color: #555; }
.nums { display: flex; font-size: 21.500px; line-height: 28px; height: 36px; letter-spacing: .3px; }
.nums span:nth-child(1) { width: 71px; margin-left: -6px; }
.nums span:nth-child(2) { width: 91px; margin-left: 6px; }
.bar { display: flex; width: 183px; height: 17px; border: 2px solid #666; }
.bar i { flex: 1; }
.bar i:first-child { background: #bdbdbd; border-right: 2px solid #666; }

.panels { flex: 1; padding: 3px 0 0 12px; position: relative; }
.tabs { display: flex; align-items: flex-end; height: 53px; position: relative; box-shadow: inset 0 -2px 0 #b4b4b4, 0 2px 0 #fff; font-size: 25px; }
.tab { height: 49px; border: 2px solid #b4b4b4; border-radius: 7px 7px 0 0; background: linear-gradient(#d8d8d8, #dcdcdc); display: flex; align-items: center; justify-content: center; white-space: nowrap; padding-top: 4px; letter-spacing: .1px; }
.tab.on { height: 55px; margin-bottom: -2px; border-bottom: 0; background: linear-gradient(#f7f7f7, #ebebeb); padding: 0; }
.t-items { width: 118px; } .t-undo { width: 204px; border-left: 0; }
.t-layout { width: 131px; border-right: 0; } .t-prop { width: 237px; } .tab.t-prop { letter-spacing: .4px; } .t-guides { width: 132px; border-left: 0; }
.dock-title { height: 41px; display: flex; align-items: center; gap: 6px; padding: 3px 2px 0 7px; font-size: 21.500px; letter-spacing: .2px; }
.dock-title span { flex: 1; }
.dock-title svg { width: 22px; height: 22px; }
.table { height: 447px; background: #fff; border: 1px solid #b4b4b4; font-size: 25px; letter-spacing: .3px; }
.thead { height: 41px; display: flex; background: linear-gradient(#f8f8f8, #e8e8e8); border-bottom: 2px solid #a9a9a9; color: #000; }
.thead span { display: flex; align-items: center; border-left: 1px solid #c8c8c8; padding-top: 3px; }
.thead .c-eye { width: 55px; border: 0; padding-left: 5px; }
.c-lock { width: 56px; justify-content: center; padding-right: 14px; }
.c-item { flex: 1; padding-left: 6px; }
.row { height: 36px; display: flex; align-items: center; padding-left: 7px; }
.row.sel { background: #dcdcdc; color: #000; }
.row svg { width: 28px; height: 28px; margin: 1px 14px 0 2px; }
.row span { padding-bottom: 4px; white-space: nowrap; }
.check { width: 28px; height: 28px; margin: 0 28px 0 0; border: 2px solid #b9b9b9; border-radius: 2px; background: #fff; display: flex; align-items: center; justify-content: center; }
.check.on::before { content: ""; width: 8px; height: 15px; border: solid #111; border-width: 0 3px 3px 0; transform: translate(-1px, -1px) skewX(-8deg) rotate(30deg); }
.split { display: block; width: 36px; height: 4px; margin: 6px 0 3px 375px; background: radial-gradient(circle at 1.500px 1.500px, #bbb 1.300px, transparent 1.600px) 0 0 / 6px 6px; }
.vsplit { position: absolute; left: 5px; top: 639px; width: 4px; height: 34px; background: radial-gradient(circle at 1.500px 1.500px, #bbb 1.300px, transparent 1.600px) 0 0 / 6px 6px; }

.status { flex: 1; display: flex; align-items: center; background: linear-gradient(#ebebeb, #e1e1e1); font-size: 26px; letter-spacing: .1px; padding: 3px 0 0 1636px; color: #222; white-space: nowrap; position: relative; }
.sx { width: 212px; } .sy { width: 212px; } .sp { width: 212px; }
.zoom-combo { width: 255px; height: 47px; font-size: 26px; }
.zoom-combo span { padding-left: 6px; }
.zoom-combo b { width: 40px; }
.slider { width: 194px; height: 10px; margin-left: 16px; border: 2px solid #a9a9a9; border-radius: 4px; background: #d3d3d3; position: relative; flex: none; }
.slider i { position: absolute; left: -2px; top: -2px; width: 12px; height: 10px; border: 2px solid #2f70bd; background: #6aaaf0; border-radius: 4px; }
.slider b { position: absolute; left: 3px; top: -10px; width: 27px; height: 26px; border: 2px solid #a9a9a9; border-radius: 6px; background: linear-gradient(#fff, #f3f3f3); }
.sizegrip { position: absolute; right: 2px; bottom: 4px; width: 20px; height: 20px; background: radial-gradient(circle at 1.500px 1.500px, #aaa 1.200px, transparent 1.600px) 0 0 / 6px 6px; clip-path: polygon(100% 0, 100% 100%, 0 100%); }

.tick { stroke: #3c3c3c; stroke-width: 2; }
.tick-label { font-size: 17px; fill: #444; letter-spacing: -.4px; font-family: Inter, sans-serif; }
.cursor-mark { stroke: #f00; stroke-width: 2; }
```

FILE: rulers.js
```javascript
// Draws the millimetre rulers: a tick every 2 mm, longer at 10 mm, labelled at 20 mm.
const NS = "http://www.w3.org/2000/svg";
const STEP = 10.268;

function add(parent, name, attrs, text) {
  const el = document.createElementNS(NS, name);
  for (const key in attrs) el.setAttribute(key, attrs[key]);
  if (text !== undefined) el.textContent = text;
  parent.appendChild(el);
}

function draw(svg, vertical, origin, length, depth, from, cursor) {
  for (let i = -40; i < 200; i++) {
    const p = Math.floor((origin + i * STEP) / 2) * 2;
    if (p < from || p > length) continue;
    const size = i % 10 === 0 ? depth : i % 5 === 0 ? 11 : 7;
    add(svg, "line", vertical
      ? { class: "tick", x1: 30 - size, x2: 30, y1: p, y2: p }
      : { class: "tick", x1: p, x2: p, y1: 33 - size, y2: 33 });
    if (i % 10 === 0) {
      const label = String(i * 2);
      if (vertical) {
        add(svg, "text", { class: "tick-label", "text-anchor": "end", transform: `translate(17 ${p + 6}) rotate(-90)` }, label);
      } else {
        add(svg, "text", { class: "tick-label", x: p + 3, y: 19 }, label);
      }
    }
  }
  add(svg, "line", vertical
    ? { class: "cursor-mark", x1: 0, x2: 30, y1: cursor, y2: cursor }
    : { class: "cursor-mark", x1: cursor, x2: cursor, y1: 3, y2: 33 });
}

draw(document.getElementById("ruler-h"), false, 210, 1918, 30, 33, 1788);
draw(document.getElementById("ruler-v"), true, 94, 1269, 30, 0, 1092);
```
